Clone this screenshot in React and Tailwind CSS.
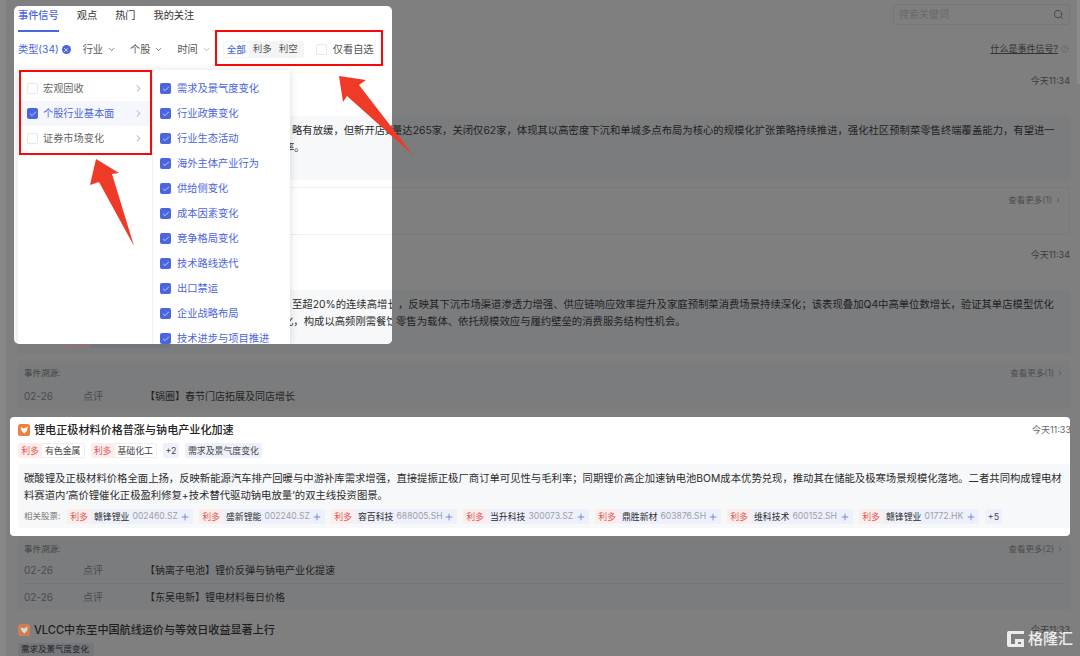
import React from 'react';
import { Check, ChevronDown, ChevronRight, CircleHelp, Plus, Search, X } from 'lucide-react';

const GROUPS = ['宏观固收', '个股行业基本面', '证券市场变化'];
const TYPES = ['需求及景气度变化', '行业政策变化', '行业生态活动', '海外主体产业行为', '供给侧变化', '成本因素变化', '竞争格局变化', '技术路线迭代', '出口禁运', '企业战略布局', '技术进步与项目推进'];
const STOCKS = [
  ['赣锋锂业', '002460.SZ'],
  ['盛新锂能', '002240.SZ'],
  ['容百科技', '688005.SH'],
  ['当升科技', '300073.SZ'],
  ['鼎胜新材', '603876.SH'],
  ['维科技术', '600152.SH'],
  ['赣锋锂业', '01772.HK'],
];

function LogoMark({ className }) {
  return (
    <svg viewBox="0 0 12 12" className={className}>
      <rect width="12" height="12" rx="2.5" fill="#ef7f3e" />
      <path d="M2.4 3.2 6 4.6 9.6 2.6 9.2 6.4 6.4 9.6 4 7.4Z" fill="#fff" />
    </svg>
  );
}

function Box({ checked }) {
  return checked ? (
    <span className="flex h-[11px] w-[11px] shrink-0 items-center justify-center rounded-[2px] bg-[#4a65dd]">
      <Check size={8} color="#fff" strokeWidth={2} />
    </span>
  ) : (
    <span className="block h-[11px] w-[11px] shrink-0 rounded-[2px] border border-[#e6e7ea] bg-white"></span>
  );
}

function Arrow({ className, viewBox, points }) {
  return (
    <svg viewBox={viewBox} className={className}>
      <polygon points={points} fill="#ee3a26" />
    </svg>
  );
}

function SourceRow({ title }) {
  return (
    <div className="flex h-[14px] items-center text-[10px] leading-[14px]">
      <span className="w-[59px] text-[#4b4b4c]">02-26</span>
      <span className="w-[62px] text-[#4b4b4c]">点评</span>
      <span className="text-[#232323]">{title}</span>
    </div>
  );
}

function MoreLink({ count }) {
  return (
    <span className="flex h-[12px] items-center text-[8.5px] leading-[12px] text-[#4c4c4c]">
      查看更多({count})
      <ChevronRight size={8} className="ml-[2px]" />
    </span>
  );
}

function DimPage() {
  return (
    <div className="flex h-full flex-col pl-[18px] pr-[10px]">
      <div className="mt-[4px] flex h-[21px] w-[177px] items-center justify-between self-end rounded-[3px] border border-[#777] px-[5px] text-[10px] text-[#696969]">
        搜索关键词
        <Search size={11} color="#444" />
      </div>
      <div className="mt-[17px] flex h-[14px] items-center justify-end pr-[1px] text-[9px] text-[#333]">
        <span className="underline">什么是事件信号?</span>
        <CircleHelp size={8} color="#666" className="ml-[3px]" />
      </div>
      <div className="mt-[18px] h-[14px] text-right text-[9px] leading-[14px] text-[#3c3c3c]">今天11:34</div>

      <div className="mt-[28px] h-[64px] rounded-[3px] bg-[#7b7c7e] pl-[374px] pt-[6px] text-[10.35px] leading-[17px] text-[#222]">
        <p className="whitespace-nowrap">量达265家&#xFF0C;关闭仅62家&#xFF0C;体现其以高密度下沉和单城多点布局为核心的规模化扩张策略持续推进&#xFF0C;强化社区预制菜零售终端覆盖能力&#xFF0C;有望进一</p>
      </div>
      <div className="mt-[7px] flex h-[48px] items-start justify-end rounded-[3px] border border-[#797979] pr-[7px] pt-[6px]">
        <MoreLink count={1} />
      </div>

      <div className="mt-[13px] h-[14px] text-right text-[9px] leading-[14px] text-[#3c3c3c]">今天11:34</div>
      <div className="mt-[28px] h-[65px] overflow-hidden rounded-[3px] bg-[#7b7c7e] pl-[6px] pt-[6px] text-[10.35px] leading-[17px] text-[#222]">
        <p className="whitespace-nowrap pl-[374px]">&#xFF0C;反映其下沉市场渠道渗透力增强、供应链响应效率提升及家庭预制菜消费场景持续深化&#xFF1B;该表现叠加Q4中高单位数增长&#xFF0C;验证其单店模型优化</p>
        <p className="whitespace-nowrap pl-[372px]">零售为载体、依托规模效应与履约壁垒的消费服务结构性机会。</p>
        <div className="mt-[4px] flex h-[14px] items-center text-[8.5px] text-[#444]">
          <span className="w-[43px]">相关股票:</span>
          <span className="h-[14px] w-[24px] bg-[#8a7474]"></span>
          <span className="h-[14px] w-[80px] bg-[#74767f]"></span>
        </div>
      </div>
      <div className="mt-[7px] flex h-[48px] flex-col rounded-[3px] bg-[#7b7c7e] px-[6px] pt-[6px]">
        <div className="flex items-center justify-between text-[8.5px] leading-[12px] text-[#444]">
          事件溯源:
          <MoreLink count={1} />
        </div>
        <div className="mt-[10px]">
          <SourceRow title="【锅圈】春节门店拓展及同店增长" />
        </div>
      </div>

      <div className="mt-[128px] flex h-[73px] flex-col rounded-[3px] bg-[#7b7c7e] px-[6px] pt-[6px]">
        <div className="flex items-center justify-between text-[8.5px] leading-[12px] text-[#444]">
          事件溯源:
          <MoreLink count={2} />
        </div>
        <div className="mt-[8px] border-b border-[#767676] pb-[6px]">
          <SourceRow title="【钠离子电池】锂价反弹与钠电产业化提速" />
        </div>
        <div className="mt-[6px]">
          <SourceRow title="【东吴电新】锂电材料每日价格" />
        </div>
      </div>

      <div className="mt-[13px] flex h-[14px] items-center justify-between">
        <span className="flex items-center text-[11.1px] font-medium text-[#1e1e1e]">
          <LogoMark className="mr-[4px] h-[12px] w-[12px] opacity-70" />
          VLCC中东至中国航线运价与等效日收益显著上行
        </span>
        <span className="text-[9px] text-[#3c3c3c]">今天11:33</span>
      </div>
      <div className="mt-[6px] h-[13px] w-[76px] rounded-[2px] bg-[#74767c] px-[3px] text-[8.5px] leading-[13px] text-[#222]">需求及景气度变化</div>
    </div>
  );
}

function FilterPopup() {
  return (
    <div className="absolute left-[14px] top-[6px] h-[338px] w-[378px] overflow-hidden rounded-[5px] bg-white">
      <div className="flex gap-[18px] pl-[4px] text-[10.2px] leading-[18px] text-[#333]">
        <span className="border-b-2 border-[#4a65dd] pb-[6px] font-medium text-[#4a65dd]">事件信号</span>
        <span>观点</span>
        <span>热门</span>
        <span>我的关注</span>
      </div>
      <div className="mt-[9px] flex h-[17px] items-center pl-[4px] text-[10.2px] text-[#555]">
        <span className="text-[#4a65dd]">类型(34)</span>
        <span className="ml-[3px] flex h-[9px] w-[9px] items-center justify-center rounded-full bg-[#4a65dd]">
          <X size={6} color="#fff" strokeWidth={3} />
        </span>
        <span className="ml-[12px]">行业</span>
        <ChevronDown size={9} className="ml-[4px]" />
        <span className="ml-[14px]">个股</span>
        <ChevronDown size={9} className="ml-[4px]" />
        <span className="ml-[14px]">时间</span>
        <ChevronDown size={9} color="#aaa" className="ml-[4px]" />
        <div className="ml-[12px] flex h-[17px] w-[81px] items-center rounded-[3px] bg-[#f3f4f6] px-[1px] text-[9.5px]">
          <span className="rounded-[2px] bg-white px-[3px] font-medium leading-[15px] text-[#4a65dd]">全部</span>
          <span className="ml-[4px]">利多</span>
          <span className="ml-[7px]">利空</span>
        </div>
        <div className="ml-[12px] flex items-center">
          <Box />
        </div>
        <span className="ml-[6px]">仅看自选</span>
      </div>

      <div className="ml-[4px] mt-[58px] h-[64px] bg-[#f7f8fa] pl-[274px] pt-[6px] text-[10.35px] leading-[17px] text-[#2b2b2b]">
        <p className="whitespace-nowrap">略有放缓&#xFF0C;但新开店数</p>
        <p className="-ml-[8px]">率。</p>
      </div>
      <div className="ml-[4px] mt-[7px] h-[48px] border-y border-[#efefef]"></div>
      <div className="ml-[4px] mt-[55px] h-[54px] bg-[#f7f8fa] pl-[274px] pt-[6px] text-[10.35px] leading-[17px] text-[#2b2b2b]">
        <p className="whitespace-nowrap">至超20%的连续高增长</p>
        <p className="-ml-[9px] whitespace-nowrap">化&#xFF0C;构成以高频刚需餐饮</p>
      </div>

      <div className="absolute bottom-0 left-[4px] top-[64px] flex w-[272px] bg-white shadow-[0_1px_8px_rgba(0,0,0,0.14)]">
        <div className="w-[134px] pt-[6px]">
          {GROUPS.map((name, i) => (
            <div key={name} className={`flex h-[25px] items-center pl-[9px] pr-[8px] text-[10.2px] ${i === 1 ? 'bg-[#f5f7fd] text-[#4a65dd]' : 'text-[#666]'}`}>
              <Box checked={i === 1} />
              <span className="ml-[5px] flex-1">{name}</span>
              <ChevronRight size={11} color={i === 1 ? '#8fa0e6' : '#999'} />
            </div>
          ))}
        </div>
        <div className="flex-1 border-l border-[#f0f0f0] pt-[6px]">
          {TYPES.map(name => (
            <div key={name} className="flex h-[25px] items-center pl-[7px] text-[10.25px] text-[#4a65dd]">
              <Box checked />
              <span className="ml-[6px]">{name}</span>
            </div>
          ))}
        </div>
      </div>
    </div>
  );
}

function StockTag({ name, code }) {
  return (
    <div className="flex h-[15px] w-[126px] items-center rounded-[2px] bg-[#eef1fb] text-[8.9px] last:w-[120px]">
      <span className="flex h-full w-[24px] items-center justify-center rounded-l-[2px] bg-[#fdeeee] text-[#e25555]">利多</span>
      <span className="ml-[3px] text-[#2b2b2b]">{name}</span>
      <span className="ml-[3px] text-[8.6px] text-[#9a9fa8]">{code}</span>
      <Plus size={10} color="#5b78e6" className="ml-auto mr-[3px]" />
    </div>
  );
}

function IndustryTag({ name }) {
  return (
    <div className="flex h-[15px] items-center text-[8.9px]">
      <span className="flex h-full w-[24px] items-center justify-center rounded-l-[2px] bg-[#fdeeee] text-[#e25555]">利多</span>
      <span className="flex h-full items-center rounded-r-[2px] border border-l-0 border-[#eee] px-[3px] text-[#444]">{name}</span>
    </div>
  );
}

function HighlightCard() {
  return (
    <div className="absolute left-[10px] top-[417px] h-[119px] w-[1060px] rounded-[4px] bg-white pl-[8px] pt-[6px]">
      <div className="flex h-[14px] items-center justify-between">
        <span className="flex items-center text-[11.1px] font-medium text-[#222]">
          <LogoMark className="mr-[4px] h-[12px] w-[12px]" />
          锂电正极材料价格普涨与钠电产业化加速
        </span>
        <span className="mr-[-1px] text-[9px] text-[#666]">今天11:33</span>
      </div>
      <div className="mt-[6px] flex h-[15px] items-center gap-[6px]">
        <IndustryTag name="有色金属" />
        <IndustryTag name="基础化工" />
        <span className="flex h-full w-[16px] items-center justify-center rounded-[2px] bg-[#eef1fb] text-[8.9px] text-[#444]">+2</span>
        <span className="flex h-full items-center rounded-[2px] bg-[#eef1fb] px-[3px] text-[8.9px] text-[#444]">需求及景气度变化</span>
      </div>
      <div className="mt-[6px] h-[64px] rounded-l-[3px] bg-[#f7f8fa] pl-[6px] pt-[6px]">
        <p className="whitespace-nowrap text-[10.35px] leading-[17px] text-[#2b2b2b]">碳酸锂及正极材料价格全面上扬&#xFF0C;反映新能源汽车排产回暖与中游补库需求增强&#xFF0C;直接提振正极厂商订单可见性与毛利率&#xFF1B;同期锂价高企加速钠电池BOM成本优势兑现&#xFF0C;推动其在储能及极寒场景规模化落地。二者共同构成锂电材</p>
        <p className="whitespace-nowrap text-[10.35px] leading-[17px] text-[#2b2b2b]">料赛道内&#x2018;高价锂催化正极盈利修复+技术替代驱动钠电放量&#x2019;的双主线投资图景。</p>
        <div className="mt-[5px] flex h-[15px] items-center gap-[6px]">
          <span className="w-[37px] text-[8.5px] text-[#777]">相关股票:</span>
          <div className="flex items-center gap-[6px]">
            {STOCKS.map(([name, code]) => <StockTag key={code} name={name} code={code} />)}
          </div>
          <span className="flex h-full w-[17px] items-center justify-center rounded-[2px] bg-[#eef1fb] text-[8.9px] text-[#444]">+5</span>
        </div>
      </div>
    </div>
  );
}

export default function App() {
  return (
    <div className="relative h-[656px] w-[1080px] overflow-hidden bg-[#7f7f7f] font-['Inter','Noto_Sans_CJK_SC',sans-serif]">
      <DimPage />

      {/* page edge + scrollbar thumb */}
      <div className="absolute bottom-0 left-0 top-0 w-[6px] bg-[#878789]"></div>
      <div className="absolute right-0 top-0 h-[84px] w-[3px] bg-[#8a8a8a]"></div>

      <FilterPopup />
      <HighlightCard />

      {/* annotations */}
      <div className="absolute left-[215px] top-[30px] h-[36px] w-[168px] border-[2.5px] border-[#f50a0a]"></div>
      <div className="absolute left-[19px] top-[70px] h-[85px] w-[133px] border-[2.5px] border-[#f50a0a]"></div>
      <Arrow className="absolute left-[88px] top-[157px] h-[91px] w-[48px]" viewBox="88 157 48 91" points="96,159 119,173 112,174 134,246 99,182 90,185" />
      <Arrow className="absolute left-[337px] top-[74px] h-[83px] w-[78px]" viewBox="337 74 78 83" points="339,76 366,80 359,85 413,155 347,96 343,102" />

      {/* watermark */}
      <div className="absolute left-[1006px] top-[630px] flex items-center">
        <svg viewBox="0 0 19 18" className="h-[18px] w-[19px]">
          <path d="M1 3a2 2 0 0 1 2-2h15v3H5v10h4V9h9v8H3a2 2 0 0 1-2-2Z M12 12h3v2h-3Z" fill="#ececec" fillRule="evenodd" />
        </svg>
        <span className="ml-[3px] text-[15px] font-medium leading-[18px] text-[#eeeeee]">格隆汇</span>
      </div>
    </div>
  );
}
